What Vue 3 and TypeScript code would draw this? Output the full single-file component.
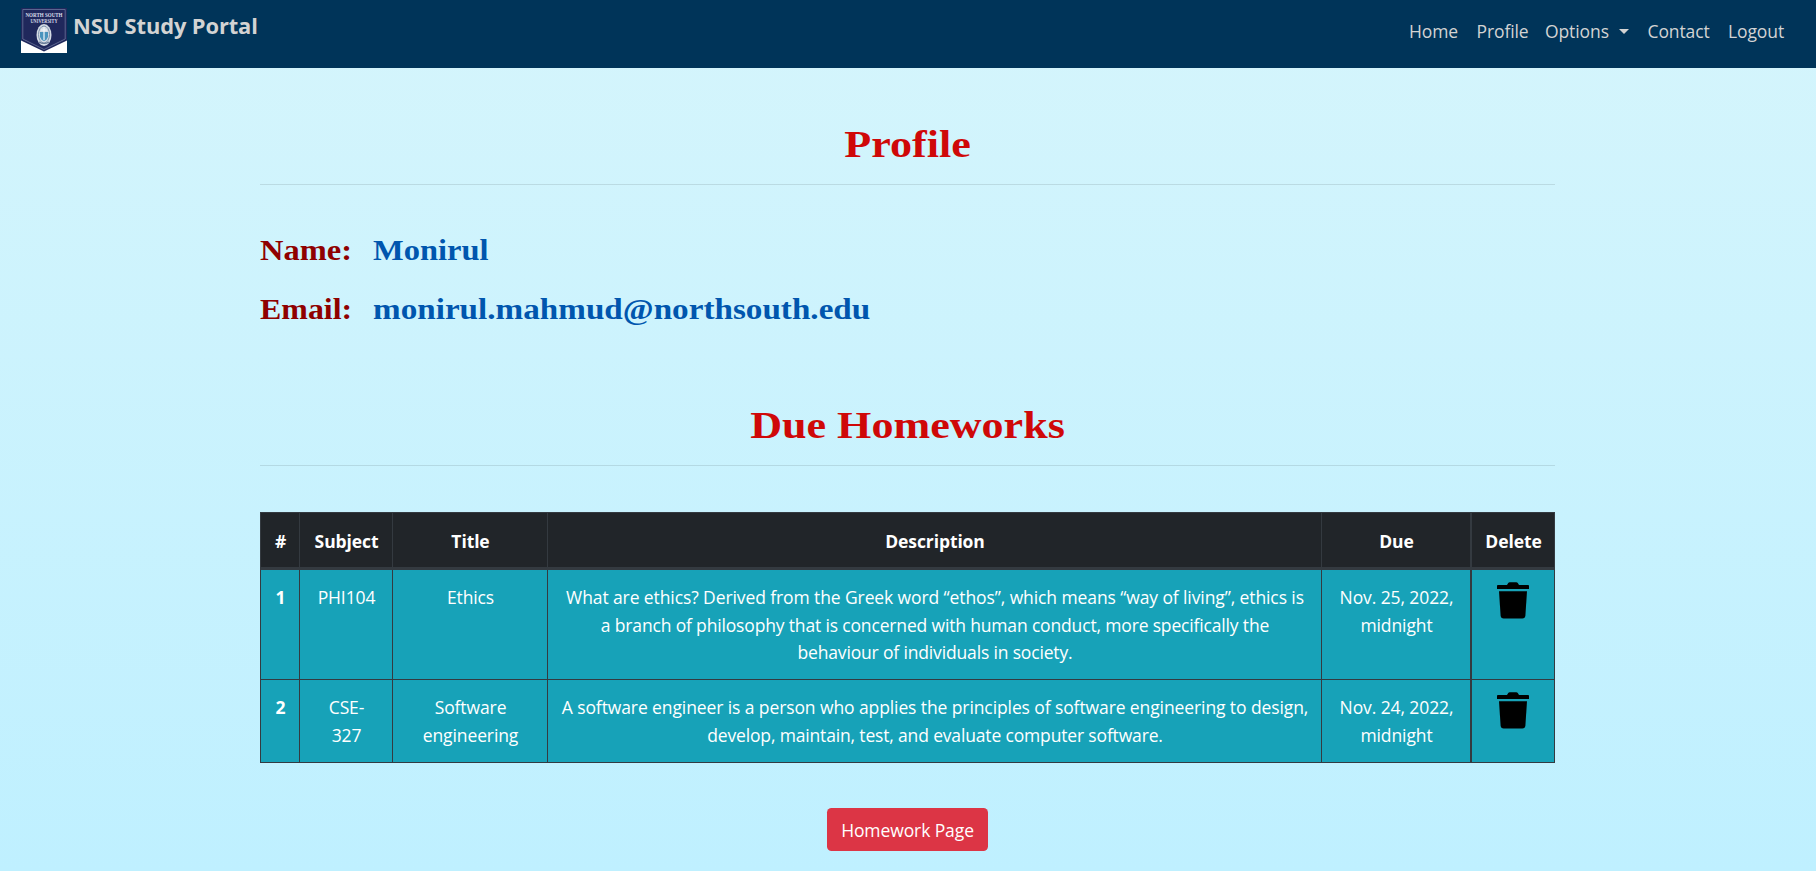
<script setup lang="ts">
interface Homework {
  id: number
  subject: string[]
  title: string[]
  description: string[]
  due: string[]
}

const details = [
  { label: 'Name:', value: 'Monirul', kind: 'name' },
  { label: 'Email:', value: 'monirul.mahmud@northsouth.edu', kind: 'email' },
]

const columns = ['#', 'Subject', 'Title', 'Description', 'Due', 'Delete']

const homeworks: Homework[] = [
  {
    id: 1,
    subject: ['PHI104'],
    title: ['Ethics'],
    description: [
      'What are ethics? Derived from the Greek word “ethos”, which means “way of living”, ethics is',
      'a branch of philosophy that is concerned with human conduct, more specifically the',
      'behaviour of individuals in society.',
    ],
    due: ['Nov. 25, 2022,', 'midnight'],
  },
  {
    id: 2,
    subject: ['CSE-', '327'],
    title: ['Software', 'engineering'],
    description: [
      'A software engineer is a person who applies the principles of software engineering to design,',
      'develop, maintain, test, and evaluate computer software.',
    ],
    due: ['Nov. 24, 2022,', 'midnight'],
  },
]
</script>

<template>
  <div class="page">
    <nav class="navbar">
      <a class="brand">
        <svg class="logo" viewBox="0 0 46 45">
          <rect width="46" height="45" fill="#fff" />
          <path d="M0 0H46V32.500L23 43.500L0 32.500Z" fill="#20285c" />
          <path d="M1.800 1.500H44.200V31L23 41.500L1.800 31Z" fill="none" stroke="#7780a5" stroke-width=".7" />
          <text x="23" y="8.700" textLength="37" lengthAdjust="spacingAndGlyphs">NORTH SOUTH</text>
          <text x="23" y="14.700" textLength="27" lengthAdjust="spacingAndGlyphs">UNIVERSITY</text>
          <ellipse cx="23" cy="27" rx="7.500" ry="11" fill="#d5dbe4" />
          <ellipse cx="23" cy="26.500" rx="5.500" ry="8.500" fill="none" stroke="#7d91ac" stroke-width="1" />
          <path d="M19 24h8v5q-1 3-4 4q-3-1-4-4z" fill="#4b94bd" />
          <path d="M23 19v13M20 22h6" stroke="#f4f7fa" stroke-width="1.200" />
          <path d="M18 34q5 3 10 0" fill="none" stroke="#657795" stroke-width="1.200" />
        </svg>
        <span>NSU Study Portal</span>
      </a>
      <div class="links">
        <a class="home">Home</a>
        <a class="profile">Profile</a>
        <a class="options">Options<i class="caret"></i></a>
        <a class="contact">Contact</a>
        <a class="logout">Logout</a>
      </div>
    </nav>

    <main class="container">
      <h2 class="t-profile">Profile</h2>
      <hr />
      <dl>
        <div v-for="d in details" :key="d.kind" class="detail" :class="d.kind">
          <dt>{{ d.label }}</dt>
          <dd>{{ d.value }}</dd>
        </div>
      </dl>
      <h2 class="t-due">Due Homeworks</h2>
      <hr />
      <table>
        <colgroup>
          <col v-for="c in columns" :key="c" :class="'c-' + (c === '#' ? 'id' : c.toLowerCase())" />
        </colgroup>
        <thead>
          <tr>
            <th v-for="c in columns" :key="c">{{ c }}</th>
          </tr>
        </thead>
        <tbody>
          <tr v-for="h in homeworks" :key="h.id" :class="'row-' + h.id">
            <th>{{ h.id }}</th>
            <td><span v-for="l in h.subject" :key="l">{{ l }}</span></td>
            <td><span v-for="l in h.title" :key="l">{{ l }}</span></td>
            <td class="desc"><span v-for="l in h.description" :key="l">{{ l }}</span></td>
            <td><span v-for="l in h.due" :key="l">{{ l }}</span></td>
            <td class="del">
              <svg viewBox="0 0 32 37">
                <path d="M0 3.800Q0 2.900 1 2.900H10L11.200 1Q11.800 .2 12.800 .2H19.200Q20.200 .2 20.800 1L22 2.900H31Q32 2.900 32 3.800V7H0Z" />
                <path d="M2 9.300H30L28.400 33.500Q28.200 36.500 25.300 36.500H6.700Q3.800 36.500 3.600 33.500Z" />
              </svg>
            </td>
          </tr>
        </tbody>
      </table>
      <button type="button">Homework Page</button>
    </main>
  </div>
</template>

<style>
body {
  margin: 0;
  overflow: hidden;
}
</style>

<style scoped>
.page {
  height: 871px;
  overflow: hidden;
  background: linear-gradient(#d5f5fc, #bff0ff);
  font-family: "Open Sans", "Noto Sans", sans-serif;
  font-size: 17.5px;
  line-height: 27.6px;
  letter-spacing: -0.1px;
  color: #fff;
}
.navbar {
  box-sizing: border-box;
  height: 68px;
  padding: 8px 29.5px 0 21px;
  display: flex;
  justify-content: space-between;
  align-items: flex-start;
  background: #003459;
  color: #d3d3d3;
}
.brand {
  display: flex;
  gap: 6px;
  font-size: 21.9px;
  font-weight: 700;
  line-height: 36px;
  letter-spacing: -0.12px;
  white-space: nowrap;
}
.logo {
  width: 46px;
  height: 45px;
  overflow: visible;
}
.logo text {
  font: 700 6.5px/1 "Liberation Serif", serif;
  letter-spacing: 0;
  fill: #d9dcea;
  text-anchor: middle;
}
.links {
  display: grid;
  grid-template-columns: 67.5px 68.5px 102.5px 80.5px 58.5px;
  padding-top: 10px;
  white-space: nowrap;
}
.caret {
  display: inline-block;
  margin-left: 10px;
  vertical-align: 4.5px;
  border: 5.5px solid transparent;
  border-top-color: #d3d3d3;
  border-bottom: 0;
}
.container {
  width: 1295px;
  margin: 0 auto;
  padding-right: 1px;
  display: flex;
  flex-direction: column;
}
h2 {
  margin: 0;
  text-align: center;
  font: 700 38px/44px "Liberation Serif", serif;
  letter-spacing: 0;
  transform: scaleX(1.16);
  color: #cf0808;
}
.t-profile {
  padding-top: 54px;
}
.t-due {
  padding-top: 53px;
}
hr {
  width: 100%;
  height: 1px;
  margin: 18px 0 0;
  border: 0;
  background: rgba(0, 0, 0, 0.1);
}
dl {
  margin: 0;
  padding-top: 47px;
}
.detail {
  display: flex;
  height: 59px;
  font: 700 28.5px/38px "Liberation Serif", serif;
  letter-spacing: 0;
}
dt {
  width: 113px;
  color: #8f0000;
}
dt,
dd {
  transform: scaleX(1.14);
  transform-origin: left;
}
.email dt {
  transform: scaleX(1.12);
}
.email dd {
  transform: scaleX(1.164);
}
dd {
  margin: 0;
  color: #0056ae;
}
table {
  width: 1295px;
  margin-top: 46px;
  table-layout: fixed;
  border-collapse: separate;
  border-spacing: 0;
  border: solid #343a40;
  border-width: 1px 0 0 1px;
  text-align: center;
}
.c-id { width: 39px; }
.c-subject { width: 93px; }
.c-title { width: 155px; }
.c-description { width: 774px; }
.c-due { width: 150px; }
.c-delete { width: 83px; }
th,
td {
  box-sizing: border-box;
  padding: 14px 0 0 1px;
  vertical-align: top;
  white-space: nowrap;
  border: solid #343a40;
  border-width: 0 1px 1px 0;
}
th:nth-child(5),
td:nth-child(5) {
  border-right-width: 2px;
}
thead th {
  height: 57px;
  padding-top: 15px;
  background: #212529;
  border-bottom-width: 3px;
}
tbody {
  background: #17a2b8;
}
.row-1 { height: 110px; }
.row-2 { height: 83px; }
td span {
  display: block;
}
.desc span:not(:first-child) {
  letter-spacing: -0.16px;
}
td.del {
  padding: 12px 1px 0 0;
  line-height: 0;
}
.del svg {
  width: 32px;
  height: 37px;
}
button {
  align-self: center;
  width: 161px;
  height: 43px;
  margin-top: 45px;
  padding: 2px 0 0;
  border: 0;
  border-radius: 4.6px;
  background: #dc3545;
  color: #fff;
  font: inherit;
  letter-spacing: inherit;
}
</style>
